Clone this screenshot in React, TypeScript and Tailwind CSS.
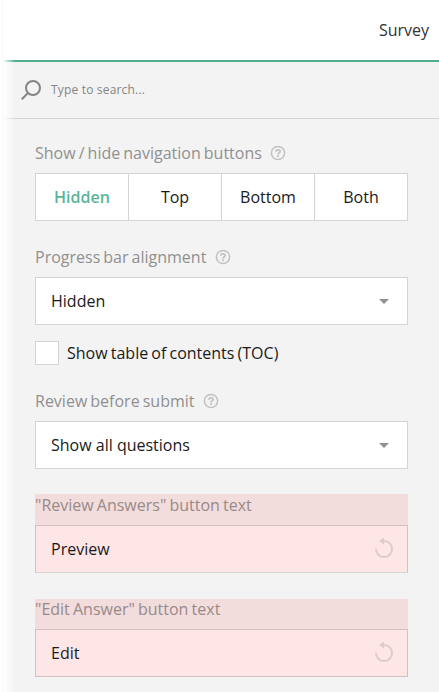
import React from "react";

function HelpIcon() {
  return (
    <svg width="16" height="16" viewBox="0 0 16 16" fill="none" stroke="#c2c2c2" strokeWidth="1.5" className="shrink-0">
      <circle cx="8" cy="8" r="6.6" />
      <path d="M5.9 6.8C5.9 5.5 6.8 4.8 8 4.8s2.1.7 2.1 1.8c0 1.4-2.1 1.4-2.1 2.8" strokeWidth="1.7" />
      <path d="M8 10.3V12" strokeWidth="1.8" />
    </svg>
  );
}

function ResetIcon() {
  return (
    <svg width="20" height="22" viewBox="0 0 20 22" fill="none" className="mr-[13px] mb-[2px] shrink-0">
      <path d="M2 12a8 8 0 1 0 8-8H8" stroke="#e1cccc" strokeWidth="2.2" />
      <path d="M5 4 10 .4v7.2z" fill="#e1cccc" />
    </svg>
  );
}

function Label({ text }: { text: string }) {
  return (
    <div className="flex h-[22px] items-center gap-[8.5px] whitespace-nowrap text-[#909090]">
      <span className="[word-spacing:-1.1px]">{text}</span>
      <HelpIcon />
    </div>
  );
}

function Select({ value }: { value: string }) {
  return (
    <div className="mt-[9px] flex h-12 items-center justify-between border border-[#d4d4d4] bg-white pr-[18px] pl-[15px] text-[#1a1a1a]">
      <span>{value}</span>
      <svg width="10" height="5" viewBox="0 0 10 5" fill="#909090">
        <path d="M0 0h10L5 5z" />
      </svg>
    </div>
  );
}

function TextSetting({
  label,
  value,
  className,
  fieldClassName,
}: {
  label: string;
  value: string;
  className: string;
  fieldClassName: string;
}) {
  return (
    <div className={className}>
      <div className="flex-1 whitespace-nowrap text-[#988a8a] [word-spacing:-1px]">{label}</div>
      <div className={fieldClassName}>
        <span>{value}</span>
        <ResetIcon />
      </div>
    </div>
  );
}

const positions = ["Hidden", "Top", "Bottom", "Both"];

export default function App() {
  return (
    <div className="relative h-[692px] w-[439px] overflow-hidden bg-[#f3f3f3] font-['Open_Sans',sans-serif] text-base leading-[22px]">
      <header className="flex h-[62px] items-center justify-end border-b-2 border-[#4fae91] bg-white pr-[10px] text-[#333333]">
        Survey
      </header>
      <div className="flex h-[57px] items-center border-b border-[#d4d4d4] pl-[21px] text-[12px] text-[#858585]">
        <svg width="20" height="20" viewBox="0 0 20 20" fill="none" stroke="#858585" strokeWidth="2">
          <circle cx="12" cy="8" r="7" />
          <path d="m7 13-6.3 6.3" />
        </svg>
        <span className="ml-[10px] tracking-[0.18px]">Type to search...</span>
      </div>
      <main className="w-[408px] pt-[23px] pl-[35px]">
        <Label text="Show / hide navigation buttons" />
        <div className="mt-[9px] grid h-12 grid-cols-[93px_93px_93px_92px] divide-x divide-[#d4d4d4] border border-[#d4d4d4] bg-white text-[#1a1a1a]">
          {positions.map((name) => (
            <div
              key={name}
              className={
                name === "Hidden"
                  ? "flex items-center justify-center font-semibold text-[#5ab598]"
                  : "flex items-center justify-center"
              }
            >
              {name}
            </div>
          ))}
        </div>
        <div className="mt-[25px]">
          <Label text="Progress bar alignment" />
          <Select value="Hidden" />
        </div>
        <div className="mt-4 flex h-6 items-center gap-2 text-[#1a1a1a]">
          <div className="size-6 border border-[#d4d4d4] bg-white" />
          <span className="[word-spacing:-1px]">Show table of contents (TOC)</span>
        </div>
        <div className="mt-[25px]">
          <Label text="Review before submit" />
          <Select value="Show all questions" />
        </div>
        <TextSetting
          label={'"Review Answers" button text'}
          value="Preview"
          className="mt-[25px] flex h-[79px] flex-col bg-[#f2dddc]"
          fieldClassName="flex h-12 items-center justify-between border border-[#d3c1c1] border-b-[#d4d4d4] bg-[#ffe6e6] pl-[15px] text-[#1a1a1a]"
        />
        <TextSetting
          label={'"Edit Answer" button text'}
          value="Edit"
          className="mt-[26px] flex h-[78px] flex-col bg-[#f2dddc] [&>div:first-child]:-mt-px"
          fieldClassName="flex h-12 items-center justify-between border border-[#d3c1c1] bg-[#ffe6e6] pl-[15px] text-[#1a1a1a]"
        />
      </main>
      <div className="absolute inset-y-0 left-0 w-[3px] border-r border-[#f8f8f8] bg-white" />
      <div className="absolute inset-y-0 left-[3px] w-3 bg-linear-to-r from-white to-transparent" />
    </div>
  );
}
